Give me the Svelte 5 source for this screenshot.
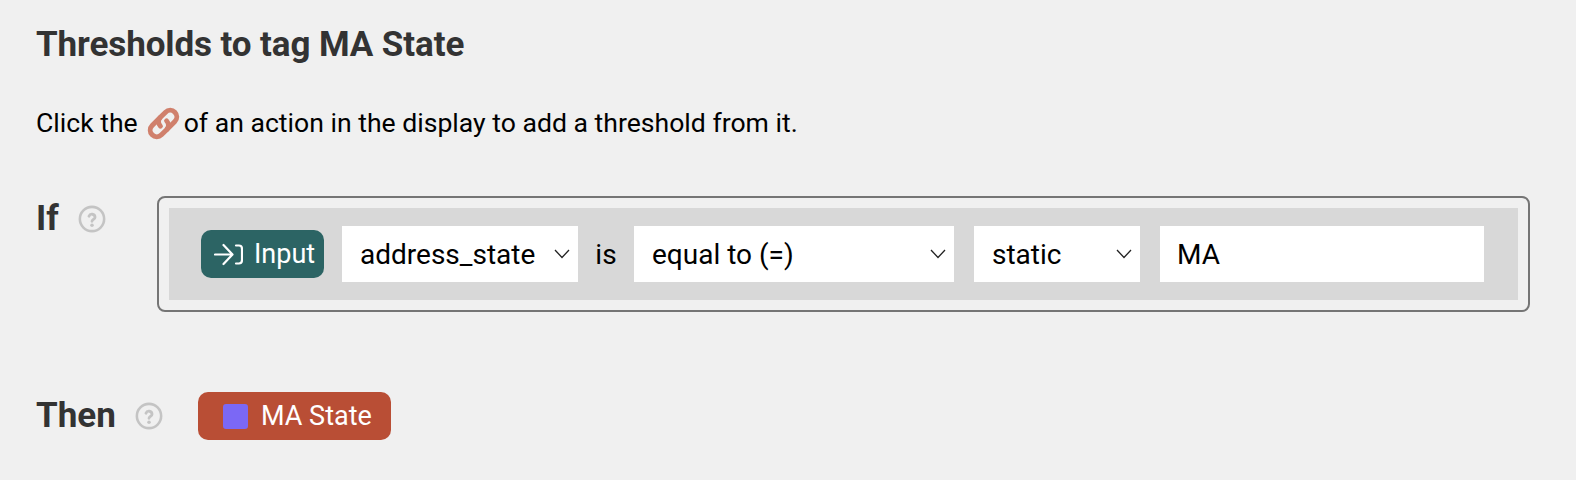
<script lang="ts">
	const fieldOps = ['equal to (=)'];
	const helpPath = 'M9.4 9.6a2.7 2.7 0 0 1 5.2.8c0 1.8-2.6 2.1-2.6 3.6';
</script>

<div class="page">
	<h2>Thresholds to tag MA State</h2>

	<p class="hint">
		<span>Click the</span>
		<svg class="link" viewBox="0 0 32 32" width="33" height="33" aria-hidden="true">
			<g fill="none" stroke="#d0806c" stroke-width="4.8" stroke-linecap="round">
				<path d="M12.5 10.5 L5 18 a6.2 6.2 0 0 0 9 9 L19 22 a6.2 6.2 0 0 0 0 -8.5" />
				<path d="M19.5 21.5 L27 14 a6.2 6.2 0 0 0 -9 -9 L13 10 a6.2 6.2 0 0 0 0 8.5" />
			</g>
		</svg>
		<span>of an action in the display to add a threshold from it.</span>
	</p>

	<div class="row if-row">
		<div class="label">
			<span>If</span>
			<svg class="help" viewBox="0 0 24 24" width="28" height="28" aria-hidden="true">
				<circle cx="12" cy="12" r="10.4" fill="none" stroke="#c4c4c4" stroke-width="2.2" />
				<path d={helpPath} fill="none" stroke="#c4c4c4" stroke-width="2.4" stroke-linecap="round" />
				<circle cx="12" cy="17.4" r="1.5" fill="#c4c4c4" />
			</svg>
		</div>
		<div class="box">
			<div class="clause">
				<div class="tag input-tag">
					<svg viewBox="0 0 29 24" width="29" height="24" aria-hidden="true">
						<path d="M1 12.5 H18 M9.5 3 L18.5 12.5 L9.5 22 M22 3.5 H25 Q28 3.5 28 7 V18 Q28 21.5 25 21.5 H22" fill="none" stroke="#fff" stroke-width="2.2" stroke-linecap="round" stroke-linejoin="round" />
					</svg>
					<span>Input</span>
				</div>
				<div class="select s1">
					<select><option>address_state</option></select>
					<svg class="chev" viewBox="0 0 16 10" width="16" height="10" aria-hidden="true"><path d="M1 1 L8 8.5 L15 1" fill="none" stroke="#222" stroke-width="1.3" /></svg>
				</div>
				<span class="is">is</span>
				<div class="select s2">
					<select>
						{#each fieldOps as op (op)}
							<option>{op}</option>
						{/each}
					</select>
					<svg class="chev" viewBox="0 0 16 10" width="16" height="10" aria-hidden="true"><path d="M1 1 L8 8.5 L15 1" fill="none" stroke="#222" stroke-width="1.3" /></svg>
				</div>
				<div class="select s3">
					<select><option>static</option></select>
					<svg class="chev" viewBox="0 0 16 10" width="16" height="10" aria-hidden="true"><path d="M1 1 L8 8.5 L15 1" fill="none" stroke="#222" stroke-width="1.3" /></svg>
				</div>
				<input class="value" type="text" value="MA" />
			</div>
		</div>
	</div>

	<div class="row then-row">
		<div class="label">
			<span>Then</span>
			<svg class="help" viewBox="0 0 24 24" width="28" height="28" aria-hidden="true">
				<circle cx="12" cy="12" r="10.4" fill="none" stroke="#c4c4c4" stroke-width="2.2" />
				<path d={helpPath} fill="none" stroke="#c4c4c4" stroke-width="2.4" stroke-linecap="round" />
				<circle cx="12" cy="17.4" r="1.5" fill="#c4c4c4" />
			</svg>
		</div>
		<div class="tag state-tag">
			<span class="swatch"></span>
			<span>MA State</span>
		</div>
	</div>
</div>

<style>
	:global(body) {
		background: #f0f0f0;
		font-family: Roboto, "Liberation Sans", sans-serif;
	}
	.page {
		height: 480px;
		box-sizing: border-box;
		padding: 27px 46px 0 36px;
		overflow: hidden;
	}
	h2 {
		margin: 0;
		font-size: 35px;
		line-height: 36px;
		font-weight: 700;
		color: #333;
		letter-spacing: -0.1px;
	}
	.hint {
		display: flex;
		align-items: center;
		margin: 42px 0 0;
		font-size: 26.6px;
		line-height: 36px;
		color: #000;
	}
	.link { margin: 0 4px 0 9px; flex: none; }
	.row { display: flex; align-items: flex-start; }
	.if-row { margin-top: 55px; }
	.then-row { margin-top: 80px; align-items: center; }
	.label {
		display: flex;
		flex: none;
		align-items: center;
		gap: 20px;
		font-size: 35px;
		line-height: 44px;
		font-weight: 700;
		color: #333;
	}
	.if-row .label { margin-top: 1px; width: 121px; }
	.then-row .label { width: 162px; }
	.help { margin-left: -1px; }
	.box {
		flex: 1;
		min-width: 0;
		box-sizing: border-box;
		height: 116px;
		padding: 10px;
		border: 2px solid #757575;
		border-radius: 8px;
	}
	.clause {
		display: flex;
		align-items: center;
		height: 92px;
		box-sizing: border-box;
		padding: 0 34px 0 32px;
		background: #d8d8d8;
		font-size: 28px;
		color: #000;
	}
	.tag {
		display: flex;
		flex: none;
		align-items: center;
		height: 48px;
		box-sizing: border-box;
		border-radius: 10px;
		color: #fff;
		font-size: 27px;
	}
	.input-tag {
		width: 123px;
		padding-left: 13px;
		gap: 11px;
		background: #2c6464;
		margin-right: 18px;
	}
	.select { position: relative; height: 56px; flex: none; }
	.s1 { width: 236px; }
	.s2 { width: 320px; margin-right: 20px; }
	.s3 { width: 166px; margin-right: 20px; }
	.is { width: 56px; flex: none; text-align: center; }
	select, .value {
		display: block;
		width: 100%;
		height: 56px;
		box-sizing: border-box;
		padding: 0 0 0 18px;
		margin: 0;
		border: 0;
		border-radius: 0;
		background: #fff;
		font: inherit;
		color: #000;
		appearance: none;
		outline: none;
	}
	.value { flex: 1; width: 0; min-width: 0; padding-left: 17px; }
	.chev {
		position: absolute;
		right: 8px;
		top: 23px;
		pointer-events: none;
	}
	.state-tag {
		width: 193px;
		padding-left: 25px;
		gap: 13px;
		background: #b94e35;
	}
	.swatch {
		width: 25px;
		height: 25px;
		border-radius: 3px;
		background: #7b68f5;
	}
</style>
